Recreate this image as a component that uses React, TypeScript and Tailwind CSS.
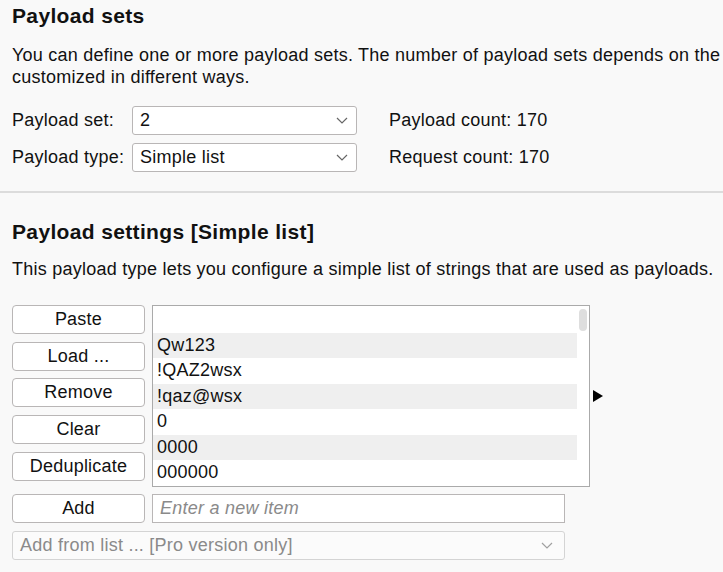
const font = { fontFamily: '"Liberation Sans", Arial, sans-serif' };

const Chevron = ({ className }: { className?: string }) => (
    <svg width="12" height="7" viewBox="0 0 12 7" className={className}>
        <path d="M1 1 L6 6 L11 1" fill="none" stroke="currentColor" strokeWidth="1.2" />
    </svg>
);

interface SelectProps {
    value: string;
    className?: string;
}

const Select: React.FC<SelectProps> = ({ value, className }) => {
    return <div className={"flex items-center justify-between h-[29px] w-[225px] bg-white border border-[#b9b6b6] rounded-[3px] pl-[7px] pr-[8px] " + (className ?? "")}>
        <span>{value}</span>
        <Chevron className="text-[#666]" />
    </div>
};

const Button = ({ label }: { label: string }) => (
    <div className="flex items-center justify-center h-[29px] w-[133px] bg-white border border-[#b9b6b6] rounded-[4px]">
        {label}
    </div>
);

const items = ["", "Qw123", "!QAZ2wsx", "!qaz@wsx", "0", "0000", "000000"];

export default function App() {
    return <div className="w-[723px] h-[572px] bg-[#f9f9f9] text-[18px] tracking-[0.24px] text-[#111] overflow-hidden" style={font}>
        <div className="px-3">
            <h1 className="text-[21px] tracking-[0.35px] font-bold leading-[24px] pt-[4px]">Payload sets</h1>
            <p className="mt-[16px] leading-[22px] whitespace-nowrap">
                You can define one or more payload sets. The number of payload sets depends on the<br />
                customized in different ways.
            </p>
            <div className="mt-[18px] flex flex-col gap-[8px]">
                <div className="flex items-center">
                    <span className="w-[120px]">Payload set:</span>
                    <Select value="2" />
                    <span className="ml-[32px]">Payload count: 170</span>
                </div>
                <div className="flex items-center">
                    <span className="w-[120px]">Payload type:</span>
                    <Select value="Simple list" />
                    <span className="ml-[32px]">Request count: 170</span>
                </div>
            </div>
        </div>
        <div className="mt-[19px] h-[2px] bg-[#dcdcdc]" />
        <div className="px-3">
            <h2 className="mt-[27px] text-[21px] tracking-[0.35px] font-bold leading-[24px]">Payload settings [Simple list]</h2>
            <p className="mt-[14px] leading-[22px] whitespace-nowrap">This payload type lets you configure a simple list of strings that are used as payloads.</p>
            <div className="mt-[25px] flex items-start">
                <div className="flex flex-col gap-[7.7px]">
                    <Button label="Paste" />
                    <Button label="Load ..." />
                    <Button label="Remove" />
                    <Button label="Clear" />
                    <Button label="Deduplicate" />
                </div>
                <div className="ml-[7px] w-[438px] h-[182px] bg-white border border-[#aaaaaa] overflow-hidden flex">
                    <div className="flex-1 pt-[1px]">
                        {items.map((it, i) => (
                            <div key={i} className={"h-[25.5px] leading-[25.5px] pl-[4px] " + (i % 2 === 1 ? "bg-[#efefef]" : "")}>{it}</div>
                        ))}
                    </div>
                    <div className="w-[12px] pt-[3px] flex justify-center">
                        <div className="w-[8px] h-[22px] rounded-full bg-[#dedede]" />
                    </div>
                </div>
                <svg width="12" height="14" viewBox="0 0 12 14" className="ml-[2px] mt-[84px]">
                    <path d="M1 1 L11 7 L1 13 Z" fill="#000" />
                </svg>
            </div>
            <div className="mt-[7px] flex items-center">
                <Button label="Add" />
                <div className="ml-[7px] w-[413px] h-[29px] bg-white border border-[#b9b6b6] flex items-center px-[7px] italic text-[#8a8a8a]">
                    Enter a new item
                </div>
            </div>
            <div className="mt-[8px] flex items-center justify-between w-[553px] h-[29px] bg-[#fbfbfb] border border-[#d4d4d4] rounded-[3px] pl-[7px] pr-[11px] text-[#8a8a8a]">
                <span>Add from list ... [Pro version only]</span>
                <Chevron className="text-[#a0a0a0]" />
            </div>
        </div>
    </div>
}
